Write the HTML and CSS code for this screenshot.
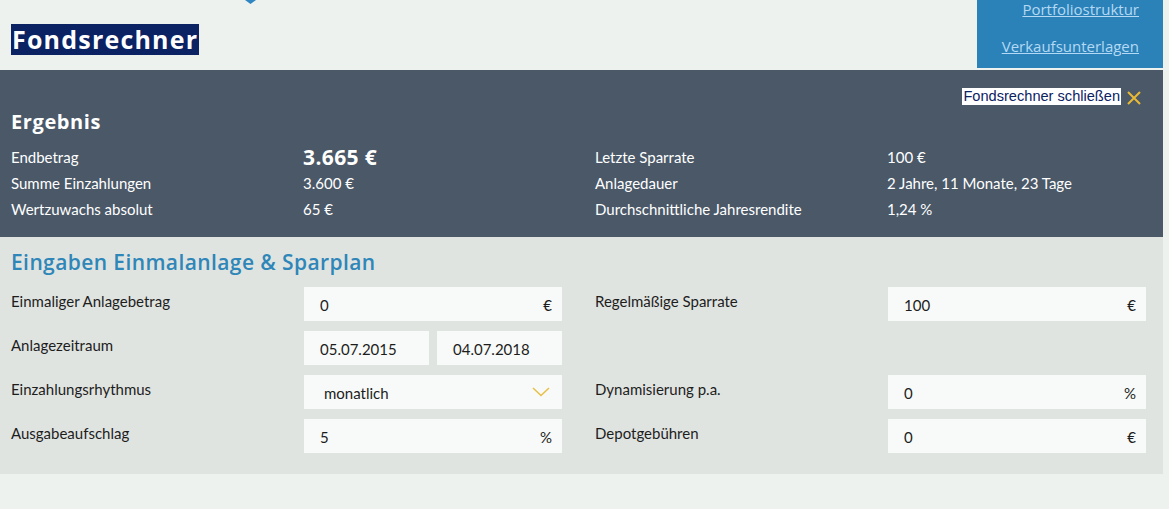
FILE: index.html
```html
<!DOCTYPE html>
<html lang="de">
<head>
<meta charset="utf-8">
<title>Fondsrechner</title>
<link rel="stylesheet" href="styles.css">
</head>
<body>
<div class="page">
  <header class="header">
    <div class="header-left">
      <div class="marker"></div>
      <h1 class="title">Fondsrechner</h1>
    </div>
    <nav class="side-links">
      <a href="#">Portfoliostruktur</a>
      <a href="#">Verkaufsunterlagen</a>
    </nav>
  </header>

  <section class="result">
    <div class="close-row">
      <span class="close-text">Fondsrechner schließen</span>
      <svg class="close-icon" width="16" height="16" viewBox="0 0 16 16"><path d="M2 2 L14 14 M14 2 L2 14" stroke="#e8b934" stroke-width="2" fill="none"/></svg>
    </div>
    <h2 class="result-title">Ergebnis</h2>
    <div class="result-grid">
      <div class="r-label">Endbetrag</div>
      <div class="r-value big">3.665 €</div>
      <div class="r-label">Letzte Sparrate</div>
      <div class="r-value">100 €</div>

      <div class="r-label">Summe Einzahlungen</div>
      <div class="r-value">3.600 €</div>
      <div class="r-label">Anlagedauer</div>
      <div class="r-value">2 Jahre, 11 Monate, 23 Tage</div>

      <div class="r-label">Wertzuwachs absolut</div>
      <div class="r-value">65 €</div>
      <div class="r-label">Durchschnittliche Jahresrendite</div>
      <div class="r-value">1,24 %</div>
    </div>
  </section>

  <section class="inputs">
    <h2 class="inputs-title">Eingaben Einmalanlage &amp; Sparplan</h2>
    <div class="input-grid">
      <div class="i-label">Einmaliger Anlagebetrag</div>
      <div class="field"><span>0</span><span class="unit">€</span></div>
      <div class="i-label right">Regelmäßige Sparrate</div>
      <div class="field"><span>100</span><span class="unit">€</span></div>

      <div class="i-label">Anlagezeitraum</div>
      <div class="dates">
        <div class="field"><span>05.07.2015</span></div>
        <div class="field"><span>04.07.2018</span></div>
      </div>
      <div class="i-label right"></div>
      <div></div>

      <div class="i-label">Einzahlungsrhythmus</div>
      <div class="field select"><span>monatlich</span>
        <svg class="chev" width="18" height="10" viewBox="0 0 18 10"><path d="M1 1 L9 8.5 L17 1" stroke="#e8c04a" stroke-width="1.6" fill="none"/></svg>
      </div>
      <div class="i-label right">Dynamisierung p.a.</div>
      <div class="field"><span>0</span><span class="unit">%</span></div>

      <div class="i-label">Ausgabeaufschlag</div>
      <div class="field"><span>5</span><span class="unit">%</span></div>
      <div class="i-label right">Depotgebühren</div>
      <div class="field"><span>0</span><span class="unit">€</span></div>
    </div>
  </section>
</div>
</body>
</html>
```

FILE: styles.css
```css
* { box-sizing: border-box; }
html, body { margin: 0; padding: 0; }
body {
  background: #eef2ef;
  font-family: Lato, "Open Sans", sans-serif;
  width: 1169px;
  height: 509px;
  overflow: hidden;
}
.page { width: 1163px; }

.header {
  display: flex;
  justify-content: space-between;
  height: 70px;
}
.header-left { padding-left: 11px; }
.marker {
  margin-left: 234px;
  width: 11px;
  height: 4px;
  background: #2f86c0;
  clip-path: polygon(0 0, 100% 0, 50% 100%);
}
.title {
  margin: 20px 0 0 0;
  display: inline-block;
  background: #0b2263;
  color: #fff;
  font-family: "Open Sans", sans-serif;
  font-weight: 700;
  font-size: 25px;
  line-height: 31px;
  padding: 0 1px;
  letter-spacing: 1.2px;
}
.side-links {
  width: 186px;
  height: 68px;
  background: #2b82b8;
  display: flex;
  flex-direction: column;
  align-items: flex-end;
  padding: 0 24px 0 0;
}
.side-links a {
  font-family: "Open Sans", sans-serif;
  font-size: 15px;
  color: #b4d9f4;
  text-decoration: underline;
  line-height: 18px;
}
.side-links a + a { margin-top: 19px; }

.result {
  background: #4a5868;
  height: 167px;
  padding: 17px 0 0 11px;
  color: #fff;
}
.close-row {
  display: flex;
  justify-content: flex-end;
  align-items: center;
  padding-right: 21px;
  gap: 5px;
  height: 18px;
}
.close-text {
  background: #fff;
  color: #0b2263;
  font-family: "Liberation Sans", Arial, sans-serif;
  font-size: 14.6px;
  line-height: 17px;
  padding: 0 1px;
}
.close-icon { margin-top: 3px; }
.result-title {
  margin: 5px 0 0 0;
  font-family: "Open Sans", sans-serif;
  font-weight: 700;
  font-size: 20px;
  line-height: 24px;
  letter-spacing: 0.6px;
}
.result-grid {
  margin-top: 10px;
  display: grid;
  grid-template-columns: repeat(4, 292px);
  grid-auto-rows: 26px;
  align-items: center;
}
.r-label, .r-value { font-size: 15px; }
.r-value.big {
  font-family: "Open Sans", sans-serif;
  font-weight: 700;
  font-size: 21px;
  letter-spacing: 0.4px;
}

.inputs {
  background: #e0e4e1;
  height: 237px;
  padding: 12px 0 0 11px;
}
.inputs-title {
  margin: 0;
  font-family: "Open Sans", sans-serif;
  font-weight: 600;
  color: #2f86b8;
  font-size: 21px;
  line-height: 26px;
  letter-spacing: 0.4px;
}
.input-grid {
  margin-top: 12px;
  display: grid;
  grid-template-columns: 293px 258px 326px 258px;
  grid-auto-rows: 34px;
  row-gap: 10px;
}
.i-label {
  font-size: 15px;
  color: #1d1d1d;
  padding-top: 5px;
}
.i-label.right { padding-left: 33px; }
.field {
  background: #f7faf8;
  display: flex;
  justify-content: space-between;
  align-items: center;
  padding: 2px 10px 0 16px;
  font-size: 15px;
  color: #1d1d1d;
  height: 34px;
}
.field.select { padding-left: 20px; padding-right: 12px; }
.chev { margin-top: -2px; }
.dates {
  display: grid;
  grid-template-columns: 125px 125px;
  gap: 8px;
}
```
